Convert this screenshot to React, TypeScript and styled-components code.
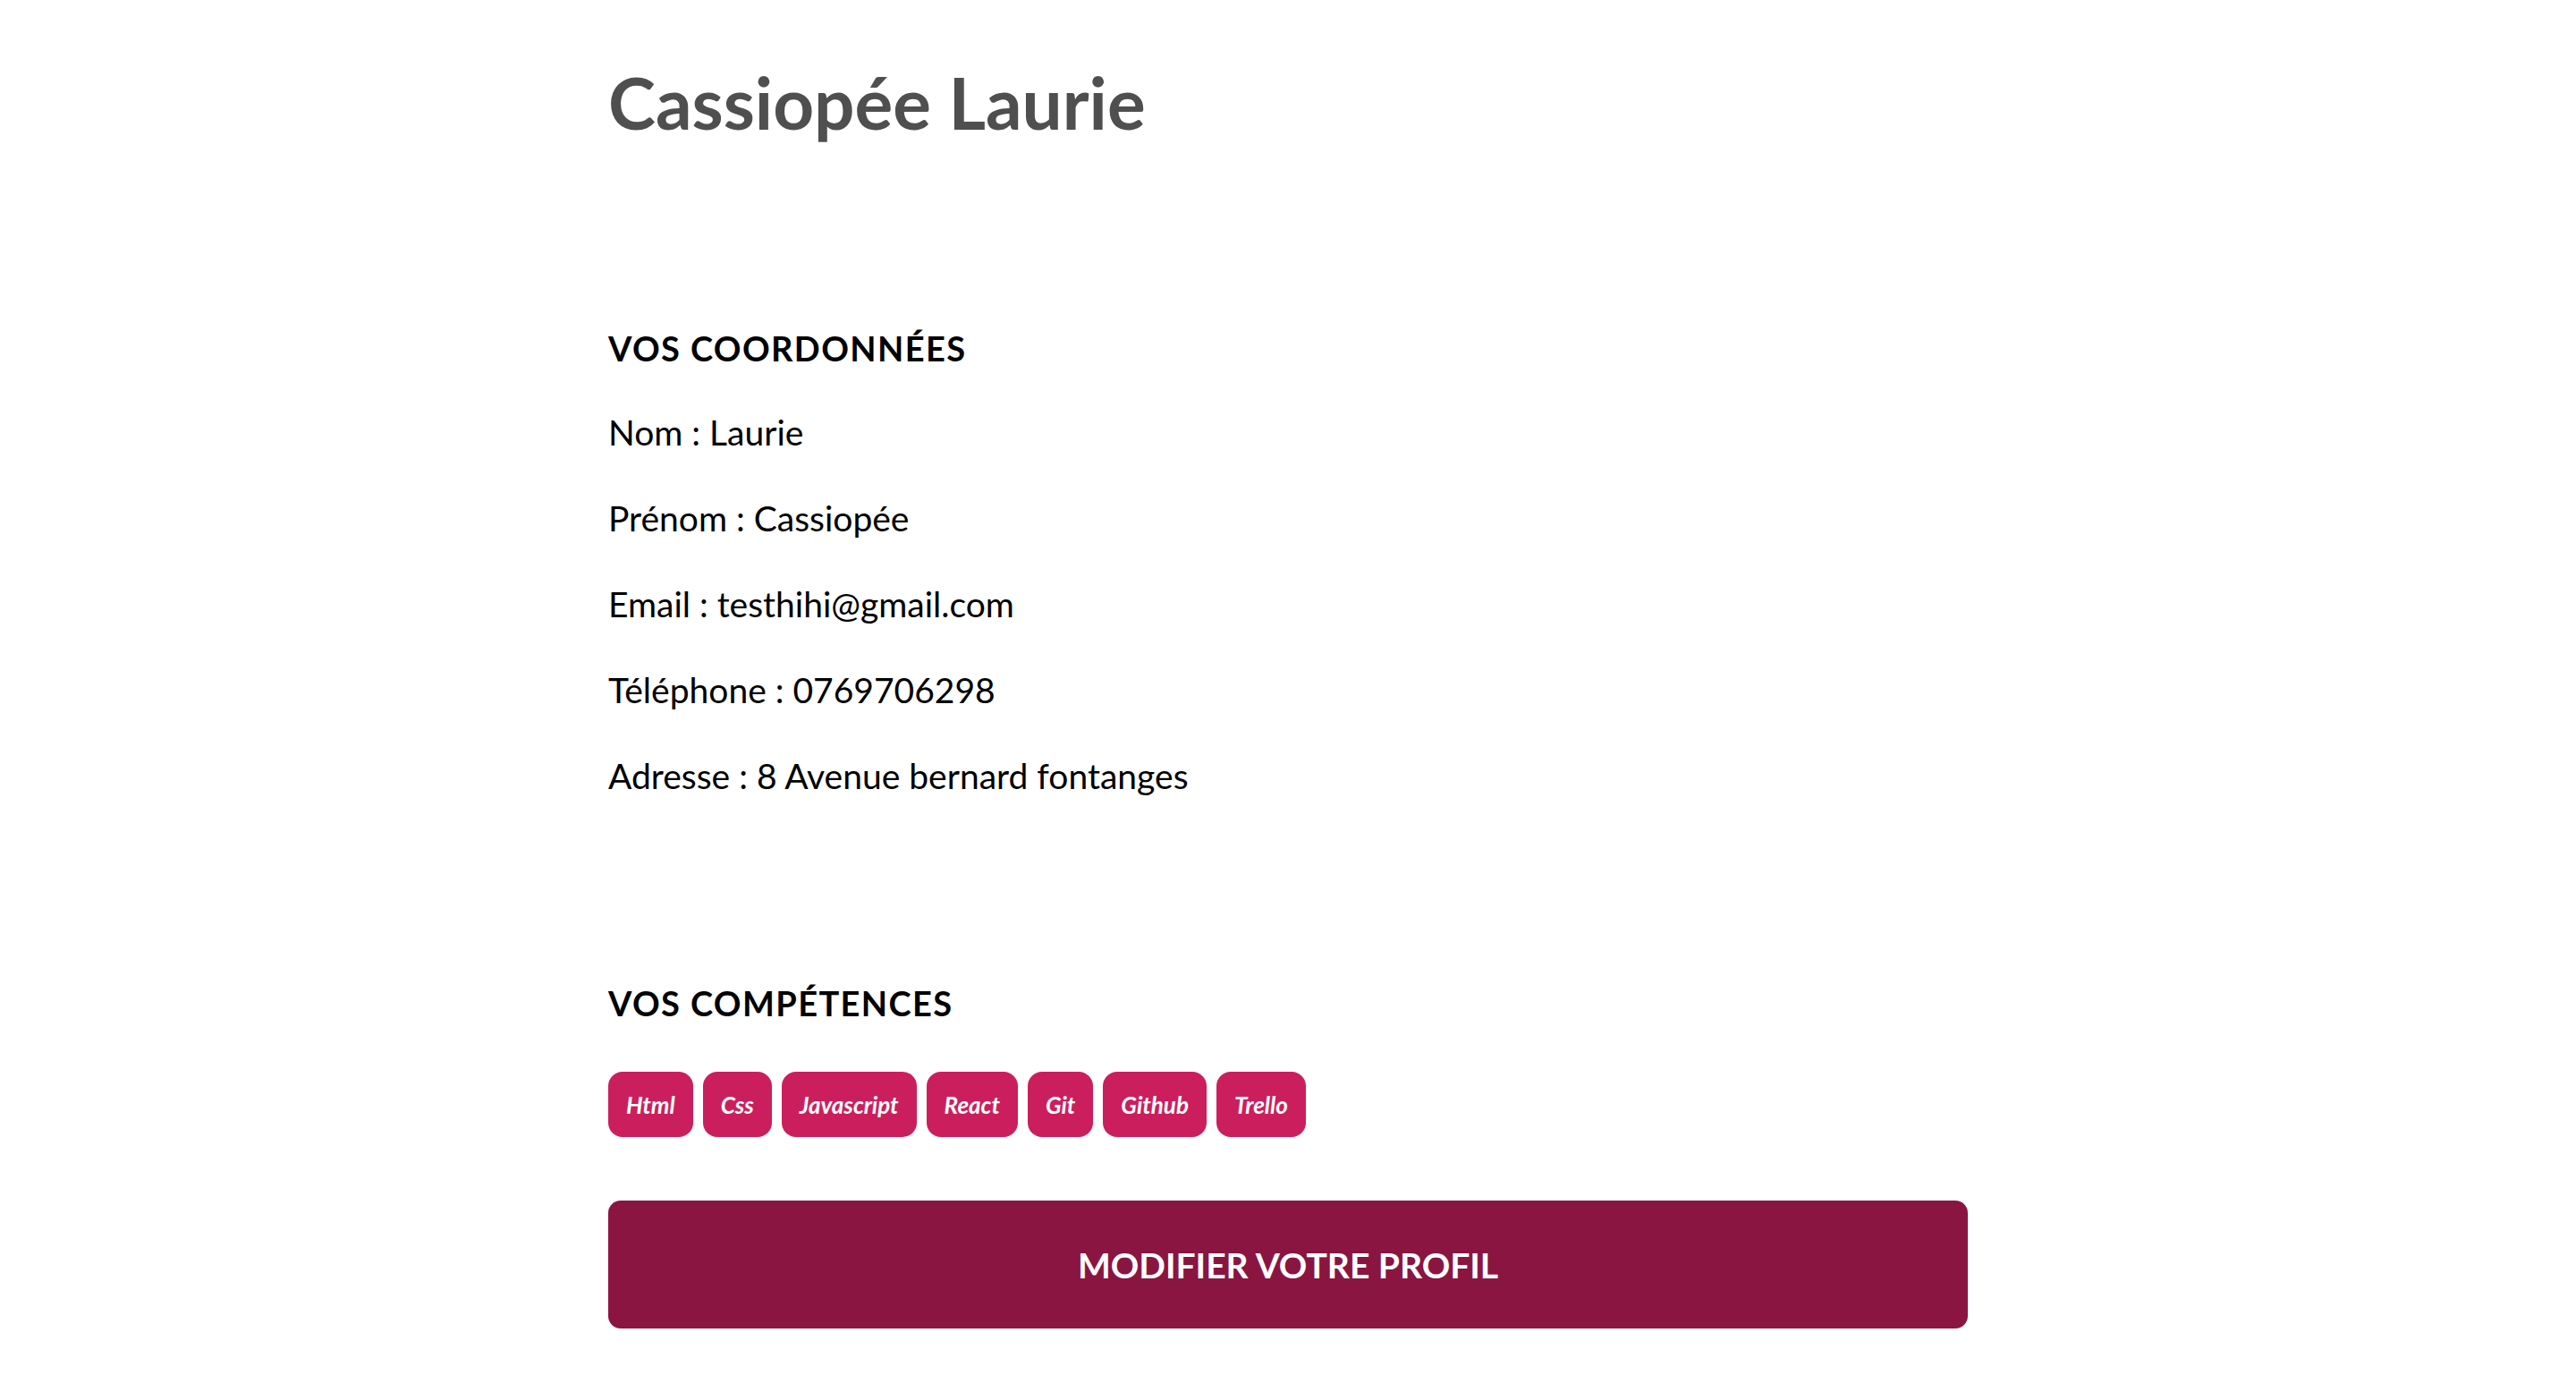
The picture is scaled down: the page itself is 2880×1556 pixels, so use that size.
import React from "react";
import styled, { createGlobalStyle } from "styled-components";

const GlobalStyle = createGlobalStyle`
  html, body {
    margin: 0;
    padding: 0;
    background: #ffffff;
  }
  body {
    font-family: Lato, "Open Sans", sans-serif;
    color: #000;
  }
`;

const Page = styled.main`
  max-width: 1520px;
  margin: 0 auto;
  padding-top: 66px;
  display: flex;
  flex-direction: column;
`;

const Title = styled.h1`
  margin: 0;
  font-family: Lato, sans-serif;
  font-weight: 700;
  font-size: 80px;
  line-height: 96px;
  color: #4f4f4f;
`;

const Section = styled.section<{ $top: number }>`
  margin-top: ${(p) => p.$top}px;
  display: flex;
  flex-direction: column;
`;

const Heading = styled.h2`
  margin: 0;
  font-family: Lato, sans-serif;
  font-weight: 700;
  font-size: 38px;
  line-height: 44px;
  letter-spacing: 1.4px;
  text-transform: uppercase;
  color: #000;
`;

const InfoList = styled.div`
  margin-top: 48px;
  display: flex;
  flex-direction: column;
  gap: 48px;
`;

const InfoLine = styled.p`
  margin: 0;
  font-family: Lato, sans-serif;
  font-weight: 400;
  font-size: 39px;
  line-height: 48px;
  color: #000;
`;

const Tags = styled.div`
  margin-top: 55px;
  display: flex;
  flex-wrap: wrap;
  gap: 11px;
`;

const Tag = styled.span`
  display: inline-flex;
  align-items: center;
  height: 73px;
  padding: 0 20px;
  border-radius: 16px;
  background: #cb1f5d;
  color: #fff;
  font-family: Lato, sans-serif;
  font-style: italic;
  font-weight: 700;
  font-size: 26px;
`;

const EditButton = styled.button`
  margin-top: 71px;
  height: 143px;
  width: 100%;
  border: none;
  border-radius: 14px;
  background: #8a1541;
  color: #fff;
  font-family: Lato, sans-serif;
  font-weight: 700;
  font-size: 39px;
  text-transform: uppercase;
  cursor: pointer;
`;

const infos = [
  "Nom : Laurie",
  "Prénom : Cassiopée",
  "Email : testhihi@gmail.com",
  "Téléphone : 0769706298",
  "Adresse : 8 Avenue bernard fontanges",
];

const skills = ["Html", "Css", "Javascript", "React", "Git", "Github", "Trello"];

export default function App() {
  return (
    <>
      <GlobalStyle />
      <Page>
        <Title>Cassiopée Laurie</Title>
        <Section $top={205}>
          <Heading>Vos coordonnées</Heading>
          <InfoList>
            {infos.map((t) => (
              <InfoLine key={t}>{t}</InfoLine>
            ))}
          </InfoList>
        </Section>
        <Section $top={208}>
          <Heading>Vos compétences</Heading>
          <Tags>
            {skills.map((s) => (
              <Tag key={s}>{s}</Tag>
            ))}
          </Tags>
        </Section>
        <EditButton>Modifier votre profil</EditButton>
      </Page>
    </>
  );
}
